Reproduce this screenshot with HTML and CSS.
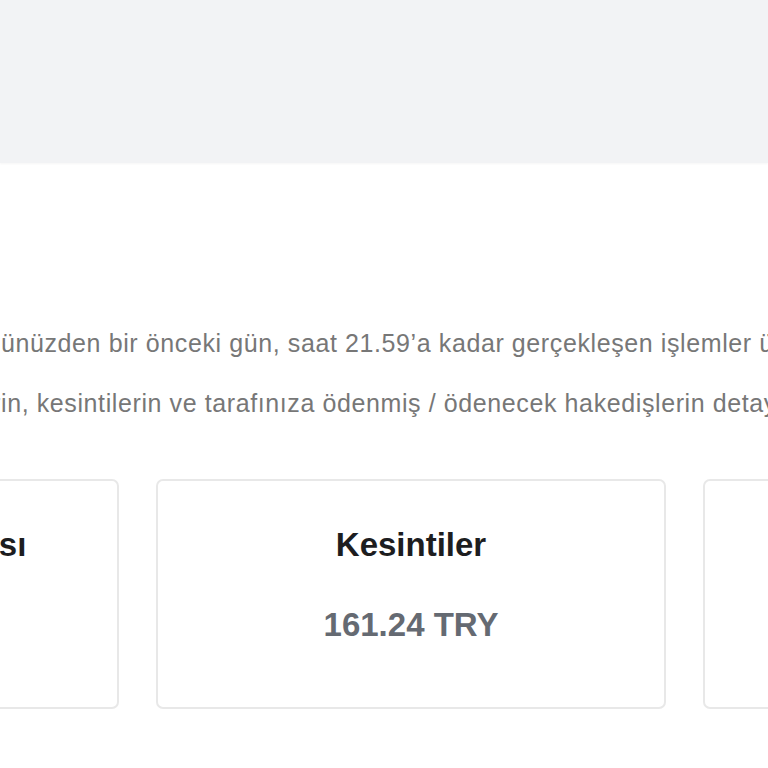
FILE: index.html
```html
<!DOCTYPE html>
<html>
<head>
	<title>Hakediş Detayları</title>
	<meta charset="utf-8">
	<meta name="viewport" content="width=device-width, initial-scale=1">
	<link rel="stylesheet" href="styles.css">
</head>
<body>
	<div class="topBar"></div>
	<div class="content">
		<p class="info"><span class="lead">Hakedişleriniz ödeme g</span>ünüzden bir önceki gün, saat 21.59’a kadar gerçekleşen işlemler üzerinden hesaplanır.</p>
		<p class="info"><span class="lead">Aşağıda ilgili işlemler</span>in, kesintilerin ve tarafınıza ödenmiş / ödenecek hakedişlerin detaylarını görebilirsiniz.</p>
		<div class="cards">
			<div class="card">
				<div class="cardTitle">Dünkü Satış Hasılası</div>
				<div class="cardValue">1,245.80 TRY</div>
			</div>
			<div class="card">
				<div class="cardTitle">Kesintiler</div>
				<div class="cardValue">161.24 TRY</div>
			</div>
			<div class="card">
				<div class="cardTitle">Net Hakediş</div>
				<div class="cardValue">1,084.56 TRY</div>
			</div>
		</div>
	</div>
</body>
</html>
```

FILE: styles.css
```css
html, body {
	margin: 0;
	padding: 0;
	background: #fff;
	overflow: hidden;
}
body {
	font-family: "Liberation Sans", Arial, sans-serif;
}
.topBar {
	height: 163px;
	background-color: #f2f3f5;
	box-shadow: 0 1px 2px rgba(0, 0, 0, 0.04);
}
.content {
	width: 1604px;
	margin-left: -391px;
	padding-top: 150px;
}
.info {
	margin: 0;
	font-size: 25px;
	letter-spacing: 0.6px;
	line-height: 60px;
	color: #777;
	white-space: nowrap;
}
.lead {
	display: inline-block;
	width: 392px;
	text-align: right;
}
.cards {
	display: flex;
	gap: 37px;
	margin-top: 46px;
}
.card {
	width: 510px;
	height: 230px;
	box-sizing: border-box;
	border: 2px solid #e8e8e8;
	border-radius: 7px;
	display: flex;
	flex-direction: column;
	align-items: center;
	padding-top: 45px;
}
.cardTitle {
	font-size: 33px;
	font-weight: bold;
	color: #1d1d1f;
}
.cardValue {
	margin-top: 42px;
	font-size: 33px;
	font-weight: bold;
	color: #656a72;
}
```
